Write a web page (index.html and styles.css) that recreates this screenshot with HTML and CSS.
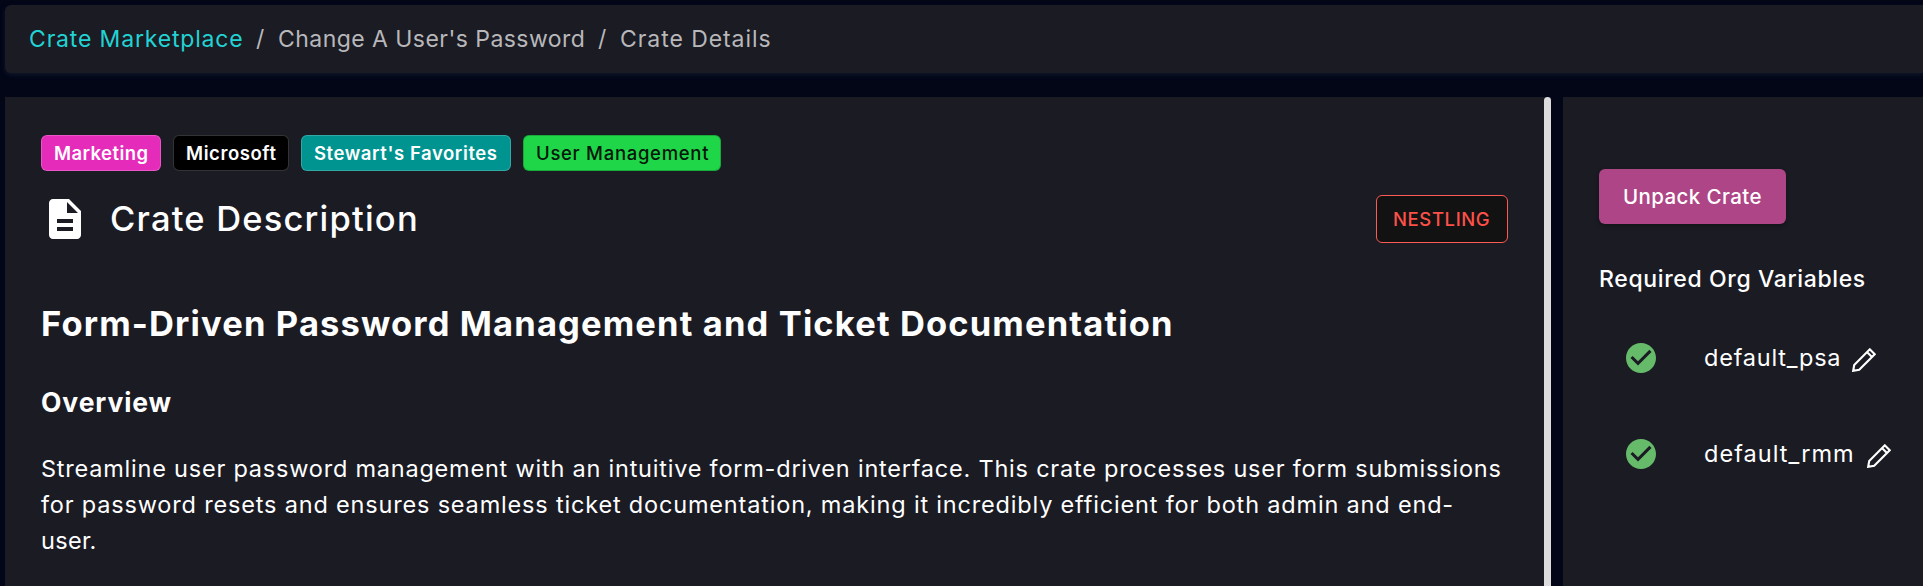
FILE: index.html
```html
<!DOCTYPE html>
<html lang="en">
<head>
<meta charset="utf-8">
<title>Crate Details</title>
<link rel="stylesheet" href="styles.css">
</head>
<body>
<nav class="breadcrumb">
  <a class="crumb crumb-link">Crate Marketplace</a>
  <span class="slash">/</span>
  <span class="crumb crumb-name">Change A User's Password</span>
  <span class="slash">/</span>
  <span class="crumb crumb-last">Crate Details</span>
</nav>
<div class="columns">
  <main class="panel details">
    <div class="tags">
      <span class="tag marketing">Marketing</span>
      <span class="tag microsoft">Microsoft</span>
      <span class="tag favorites">Stewart's Favorites</span>
      <span class="tag users">User Management</span>
    </div>
    <header class="title-row">
      <svg class="doc" viewBox="0 0 24 24"><path d="M14 2H6c-1.100 0-1.990.9-1.990 2L4 20c0 1.100.89 2 1.990 2H18c1.100 0 2-.9 2-2V8l-6-6zm2 16H8v-2h8v2zm0-4H8v-2h8v2zm-3-5V3.500L18.500 9H13z"/></svg>
      <h1 class="title">Crate Description</h1>
      <span class="level">NESTLING</span>
    </header>
    <h2 class="heading">Form-Driven Password Management and Ticket Documentation</h2>
    <h3 class="overview">Overview</h3>
    <p class="body">Streamline user password management with an intuitive form-driven interface. This crate processes user form submissions<br><span class="body-second">for password resets and ensures seamless ticket documentation, making it incredibly efficient for both admin and end-</span><br><span class="body-last">user.</span></p>
    <div class="scrollbar"></div>
  </main>
  <aside class="panel side">
    <button class="unpack">Unpack Crate</button>
    <h4 class="required">Required Org Variables</h4>
    <div class="variable">
      <svg class="check" viewBox="0 0 24 24"><path d="M12 2C6.480 2 2 6.480 2 12s4.480 10 10 10 10-4.480 10-10S17.520 2 12 2zm-2 15l-5-5 1.410-1.410L10 14.170l7.590-7.590L19 8l-9 9z"/></svg>
      <span class="psa">default_psa</span>
      <svg class="pencil" viewBox="0 0 24 24"><path d="M1.200 22.800L2.200 17L17.800 1.300L22.700 6.200L7.200 21.700ZM15 4.100L19.900 9"/></svg>
    </div>
    <div class="variable">
      <svg class="check" viewBox="0 0 24 24"><path d="M12 2C6.480 2 2 6.480 2 12s4.480 10 10 10 10-4.480 10-10S17.520 2 12 2zm-2 15l-5-5 1.410-1.410L10 14.170l7.590-7.590L19 8l-9 9z"/></svg>
      <span class="rmm">default_rmm</span>
      <svg class="pencil" viewBox="0 0 24 24"><path d="M1.200 22.800L2.200 17L17.800 1.300L22.700 6.200L7.200 21.700ZM15 4.100L19.900 9"/></svg>
    </div>
  </aside>
</div>
</body>
</html>
```
FILE: styles.css
```css
* { box-sizing: border-box; margin: 0; }

body {
  background: #020617;
  color: #fff;
  font-family: Inter, sans-serif;
  padding: 5px 0 0 5px;
  height: 586px;
  overflow: hidden;
}

/* Breadcrumb */
.breadcrumb {
  height: 68px;
  background: #1b1b24;
  border-radius: 6px 0 0 6px;
  box-shadow: 0 2px 5px rgba(30, 41, 59, 0.5);
  display: flex;
  align-items: center;
  padding: 0 0 0 24px;
  font-size: 23px;
  line-height: 36px;
  color: #b8b8ba;
  white-space: nowrap;
}
.crumb-link { color: #22d3d3; width: 215px; letter-spacing: 0.83px; }
.crumb-name { width: 308px; letter-spacing: 0.45px; }
.crumb-last { letter-spacing: 0.93px; }
.slash { width: 34px; padding-left: 12px; }

/* Panels */
.columns { display: flex; gap: 12px; margin-top: 24px; height: 489px; }
.panel { background: #1b1b24; padding: 0 36px; white-space: nowrap; }
.details { position: relative; width: 1546px; flex: none; padding: 38px 43px 0 36px; }
.side { flex: 1; padding-top: 72px; }
.scrollbar {
  position: absolute;
  top: 0;
  right: 0;
  width: 7px;
  height: 489px;
  border-radius: 4px 4px 0 0;
  background: #dcdcdc;
}

/* Tags */
.tags { display: flex; gap: 12px; }
.tag {
  height: 36px;
  border: 1px solid rgba(255, 255, 255, 0.2);
  border-radius: 6px;
  padding-left: 12px;
  font-size: 18.500px;
  font-weight: 600;
  line-height: 35px;
}
.marketing { width: 120px; background: #e52bba; letter-spacing: 0.420px; }
.microsoft { width: 116px; background: #000; letter-spacing: 0.580px; }
.favorites { width: 210px; background: #009490; letter-spacing: 0.580px; }
.users {
  width: 198px;
  background: #1fd648;
  border-color: rgba(0, 0, 0, 0.2);
  color: #04170a;
  font-weight: 500;
  letter-spacing: 0.700px;
}

/* Title row */
.title-row { display: flex; align-items: center; height: 48px; margin-top: 24px; }
.doc { width: 48px; height: 48px; fill: #fff; }
.title {
  margin-left: 21px;
  font-size: 34.500px;
  font-weight: 500;
  line-height: 48px;
  letter-spacing: 1.200px;
}
.level {
  margin-left: auto;
  width: 132px;
  height: 48px;
  border: 1px solid #fc5a52;
  border-radius: 6px;
  background: #121212;
  color: #fc5049;
  padding-left: 16px;
  font-size: 18.500px;
  font-weight: 500;
  line-height: 47px;
  letter-spacing: 0.600px;
}

/* Description */
.heading { margin-top: 57px; font-size: 34.500px; line-height: 48px; letter-spacing: 1.140px; }
.overview { margin-top: 36px; font-size: 26.500px; line-height: 36px; letter-spacing: 0.900px; }
.body { margin-top: 31px; font-size: 23.500px; line-height: 36px; letter-spacing: 0.780px; }
.body-second { letter-spacing: 0.820px; }
.body-last { letter-spacing: 0.300px; }

/* Side panel */
.unpack {
  display: block;
  width: 187px;
  height: 55px;
  border: 0;
  border-radius: 6px;
  padding: 0 0 1px 24px;
  background: #ae4586;
  box-shadow: 0 2px 4px rgba(0, 0, 0, 0.35);
  color: #fff;
  font: 500 20.500px Inter, sans-serif;
  letter-spacing: 0.400px;
  text-align: left;
}
.required {
  margin-top: 37px;
  font-size: 23px;
  font-weight: 500;
  line-height: 36px;
  letter-spacing: 0.640px;
}
.variable {
  display: flex;
  align-items: center;
  height: 96px;
  padding-left: 24px;
  font-size: 23.500px;
  line-height: 36px;
}
.required + .variable { margin-top: 13px; }
.check { width: 36px; height: 36px; margin-right: 45px; fill: #66bb6a; }
.psa { width: 148px; letter-spacing: 0.780px; }
.rmm { width: 163px; letter-spacing: 1.050px; }
.pencil {
  width: 24px;
  height: 24px;
  margin-top: 4px;
  fill: none;
  stroke: #fff;
  stroke-width: 2.100;
}
```
